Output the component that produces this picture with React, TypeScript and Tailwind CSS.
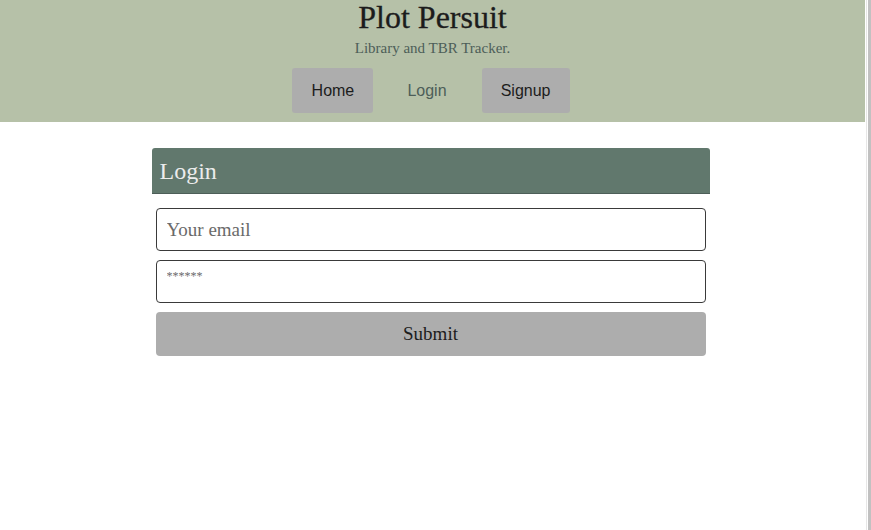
import React from "react";

export default function App() {
  const serif = { fontFamily: '"Liberation Serif", "DejaVu Serif", serif' };
  return (
    <div className="flex h-[530px] w-[871px] overflow-hidden bg-white">
      <div className="flex w-[865px] flex-col">
        <header className="flex h-[122px] flex-col items-center bg-[#b6c1a8]">
          <h1 className="mt-[-1px] text-[32px] leading-[36px] text-[#1c1c1c] [-webkit-text-stroke:0.3px_#1c1c1c]" style={serif}>
            Plot Persuit
          </h1>
          <p className="mt-[3px] text-[15px] leading-[20px] text-[#4d5e58]" style={serif}>
            Library and TBR Tracker.
          </p>
          <nav
            className="mt-[10px] ml-[-3px] flex items-center text-[16px]"
            style={{ fontFamily: '"Liberation Sans", Arial, sans-serif' }}
          >
            <button className="h-[45px] w-[81px] rounded-[3px] bg-[#adadad] text-[#1c1c1c]">Home</button>
            <button className="ml-[34px] h-[45px] text-[#4d5e58]">Login</button>
            <button className="ml-[35px] h-[45px] w-[88px] rounded-[3px] bg-[#adadad] text-[#1c1c1c]">Signup</button>
          </nav>
        </header>
        <main className="flex justify-center pt-[26px]" style={serif}>
          <div className="ml-[-4px] flex w-[558px] flex-col">
            <div className="flex h-[46px] items-center rounded-t-[3px] border-b border-[#4d5e58] bg-[#61786d] px-[8px] text-[24px] text-[#ececec]">
              Login
            </div>
            <div className="flex flex-col gap-[9px] px-[4px] pt-[14px]">
              <input
                className="h-[43px] w-full rounded-[4px] border border-[#3a3a3a] px-[10px] text-[19px] placeholder:text-[#6a6a6a] outline-none"
                placeholder="Your email"
                style={serif}
              />
              <input
                className="h-[43px] w-full rounded-[4px] border border-[#3a3a3a] px-[10px] pb-[10px] text-[12px] placeholder:text-[#6a6a6a] outline-none"
                placeholder="******"
                style={serif}
              />
              <button className="h-[44px] w-full rounded-[4px] bg-[#adadad] text-[19px] text-[#1c1c1c]" style={serif}>
                Submit
              </button>
            </div>
          </div>
        </main>
      </div>
      <div className="flex w-[6px]">
        <div className="w-[1px]" />
        <div className="w-[1px] bg-[#e6e6e6]" />
        <div className="w-[1px]" />
        <div className="w-[3px] bg-[#c1c1c1]" />
      </div>
    </div>
  );
}
